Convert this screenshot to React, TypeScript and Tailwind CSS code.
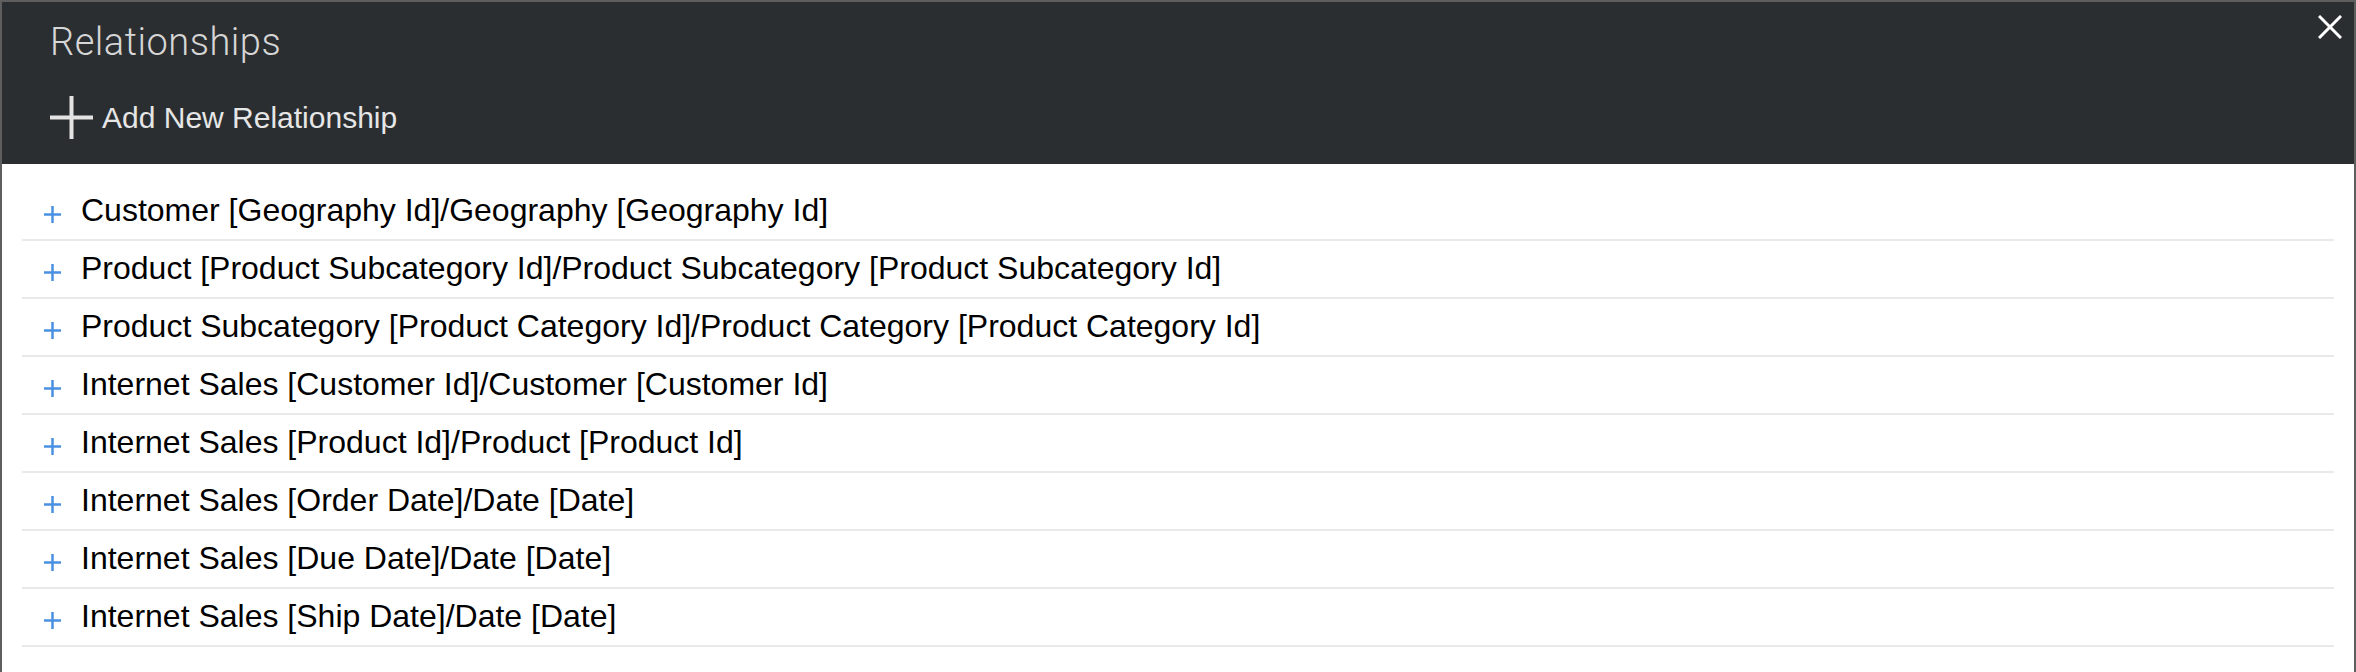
import React from 'react';

const relationships = [
  'Customer [Geography Id]/Geography [Geography Id]',
  'Product [Product Subcategory Id]/Product Subcategory [Product Subcategory Id]',
  'Product Subcategory [Product Category Id]/Product Category [Product Category Id]',
  'Internet Sales [Customer Id]/Customer [Customer Id]',
  'Internet Sales [Product Id]/Product [Product Id]',
  'Internet Sales [Order Date]/Date [Date]',
  'Internet Sales [Due Date]/Date [Date]',
  'Internet Sales [Ship Date]/Date [Date]',
];

const PlusIcon = ({ size, stroke, color }: { size: number; stroke: number; color: string }) => (
  <svg width={size} height={size} viewBox={`0 0 ${size} ${size}`} className="shrink-0">
    <line x1={0} y1={size / 2} x2={size} y2={size / 2} stroke={color} strokeWidth={stroke} />
    <line x1={size / 2} y1={0} x2={size / 2} y2={size} stroke={color} strokeWidth={stroke} />
  </svg>
);

const App = () => {
  return (
    <div className="w-full h-[672px] overflow-hidden bg-white border-t-2 border-l-2 border-r-2 border-[#5e5e5e] font-['Liberation_Sans',Arial,sans-serif]">
      <header className="relative bg-[#2b2e31] pt-[21px] pb-[25px] pl-[48px]">
        <h1 className="text-[38px] leading-none font-light tracking-[0.5px] text-[#d6d6d6] font-['Roboto',sans-serif]">
          Relationships
        </h1>
        <button className="mt-[35px] flex items-center gap-[9px] text-[30px] leading-none text-[#e6e6e6]">
          <PlusIcon size={43} stroke={4} color="#e3e3e3" />
          <span>Add New Relationship</span>
        </button>
        <button className="absolute top-[13px] right-[12px]" aria-label="Close">
          <svg width="24" height="24" viewBox="0 0 24 24">
            <line x1="1" y1="1" x2="23" y2="23" stroke="#ffffff" strokeWidth="3" />
            <line x1="23" y1="1" x2="1" y2="23" stroke="#ffffff" strokeWidth="3" />
          </svg>
        </button>
      </header>
      <ul className="px-5 pt-[19px]">
        {relationships.map((r) => (
          <li
            key={r}
            className="flex items-center h-[58px] pl-[22px] gap-[20px] border-b-2 border-[#e9e9e9] text-[32px] text-black"
          >
            <span className="mt-[7px]">
              <PlusIcon size={17} stroke={2.5} color="#4a90e2" />
            </span>
            <span className="leading-none -mt-[2px]">{r}</span>
          </li>
        ))}
      </ul>
    </div>
  );
};

export default App;
